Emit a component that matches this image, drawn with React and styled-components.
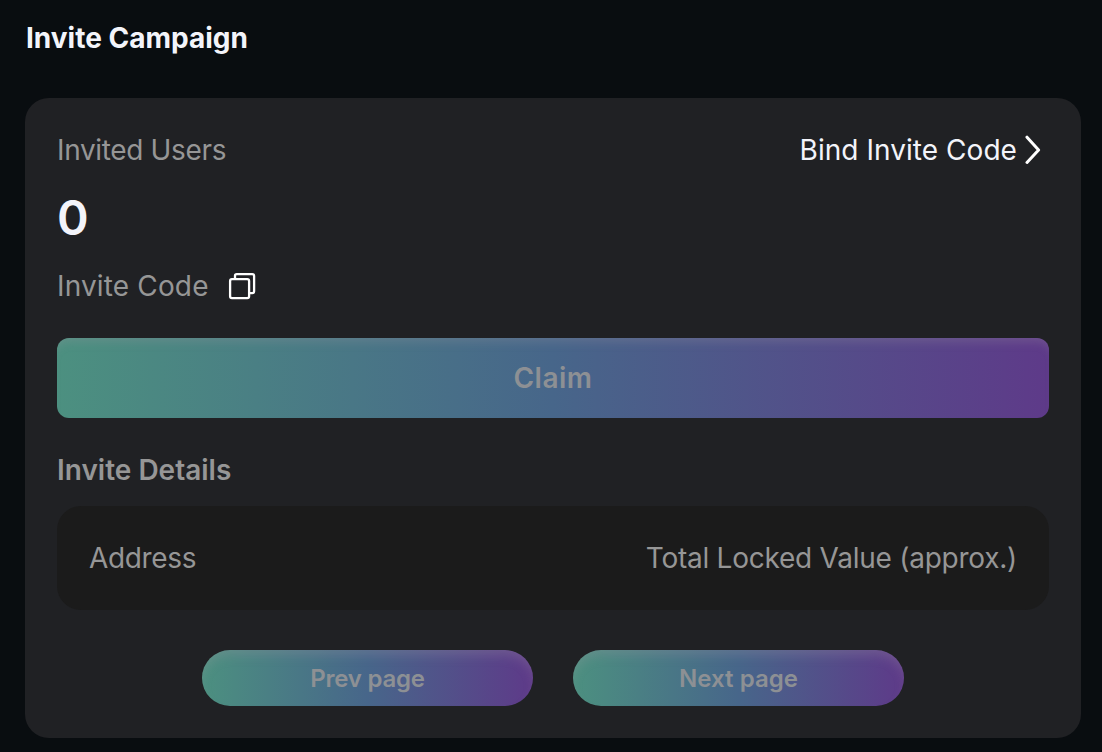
import styled, { createGlobalStyle } from "styled-components";

const App = () => {
  return (
    <>
      <GlobalStyle />
      <Container>
        <Title>
          <Text $spacing="0px">Invite Campaign</Text>
        </Title>

        <Card>
          <CardHeader>
            <Label>
              <Text $spacing="-0.35px">Invited Users</Text>
            </Label>
            <BindLink>
              <Text $spacing="0.05px">Bind Invite Code</Text>
              <ChevronIcon viewBox="0 0 16 30">
                <path d="M2 2.2 13.6 15 2 27.4" />
              </ChevronIcon>
            </BindLink>
          </CardHeader>

          <Amount>0</Amount>

          <CodeRow>
            <Label>
              <Text $spacing="0.15px">Invite Code</Text>
            </Label>
            <CopyIcon viewBox="0 0 28 28">
              <rect x="2.1" y="7.1" width="19" height="19" rx="1.8" />
              <path d="M7 7V3.8Q7 2.1 8.7 2.1H24.3Q26.1 2.1 26.1 3.9V19.3Q26.1 21.1 24.3 21.1H21.1" />
            </CopyIcon>
          </CodeRow>

          <ClaimButton disabled>
            <Text $spacing="0.5px">Claim</Text>
          </ClaimButton>

          <DetailsTitle>
            <Text $spacing="0px">Invite Details</Text>
          </DetailsTitle>

          <TableHead>
            <Text $spacing="-0.35px">Address</Text>
            <Text $spacing="-0.25px">Total Locked Value (approx.)</Text>
          </TableHead>

          <Pagination>
            <PageButton disabled>
              <Text $spacing="-0.25px">Prev page</Text>
            </PageButton>
            <PageButton disabled>
              <Text $spacing="0.05px">Next page</Text>
            </PageButton>
          </Pagination>
        </Card>
      </Container>
    </>
  );
};

export default App;

const GlobalStyle = createGlobalStyle`
  * {
    box-sizing: border-box;
  }

  body {
    margin: 0;
    background-color: #090d10;
    font-family: Inter, sans-serif;
    font-size: 28px;
    line-height: 40px;
    color: #f3f4fa;
  }

  button {
    font-family: inherit;
    border: 0;
    padding: 0;
  }
`;

const Container = styled.div`
  height: 752px;
  padding: 18px 21px 14px 25px;
  overflow: hidden;
`;

const Text = styled.span`
  letter-spacing: ${(props) => props.$spacing};
  white-space: nowrap;
`;

const Title = styled.h1`
  margin: 0 0 40px;
  padding-left: 1px;
  font-size: 28px;
  font-weight: 700;
`;

const Card = styled.section`
  height: 640px;
  padding: 32px;
  border-radius: 24px;
  background-color: #202124;
`;

const CardHeader = styled.div`
  display: flex;
  justify-content: space-between;
  align-items: center;
`;

const Label = styled.div`
  color: #969696;
`;

const BindLink = styled.div`
  display: flex;
  align-items: center;
  gap: 8px;
  margin-right: 8px;
`;

const ChevronIcon = styled.svg`
  width: 16px;
  height: 30px;
  fill: none;
  stroke: #fff;
  stroke-width: 3;
  stroke-linecap: round;
  stroke-linejoin: round;
`;

const Amount = styled.div`
  margin: 16px 0;
  font-size: 48px;
  font-weight: 600;
  line-height: 64px;
`;

const CodeRow = styled.div`
  display: flex;
  align-items: center;
  gap: 19px;
`;

const CopyIcon = styled.svg`
  width: 28px;
  height: 28px;
  fill: none;
  stroke: #fff;
  stroke-width: 2.3;
`;

const GradientButton = styled.button`
  display: flex;
  justify-content: center;
  align-items: center;
  color: #8d9094;
  font-weight: 600;
  background: linear-gradient(90deg, #4c9080 0%, #47668a 50%, #5e3a89 100%);
`;

const ClaimButton = styled(GradientButton)`
  width: 100%;
  height: 80px;
  margin-top: 32px;
  border-radius: 12px;
  font-size: 28px;
  box-shadow: inset 0 10px 10px -6px rgba(160, 150, 160, 0.25);
`;

const DetailsTitle = styled.h2`
  margin: 32px 0 16px;
  color: #969696;
  font-size: 28px;
  font-weight: 600;
`;

const TableHead = styled.div`
  display: flex;
  justify-content: space-between;
  align-items: center;
  height: 104px;
  padding: 0 32px;
  border-radius: 24px;
  background-color: #1b1b1b;
  color: #969696;
`;

const Pagination = styled.div`
  display: flex;
  justify-content: center;
  gap: 40px;
  margin-top: 40px;
`;

const PageButton = styled(GradientButton)`
  width: 331px;
  height: 56px;
  border-radius: 28px;
  font-size: 24px;
  box-shadow: inset 0 8px 12px -3px rgba(160, 150, 160, 0.28);
`;
